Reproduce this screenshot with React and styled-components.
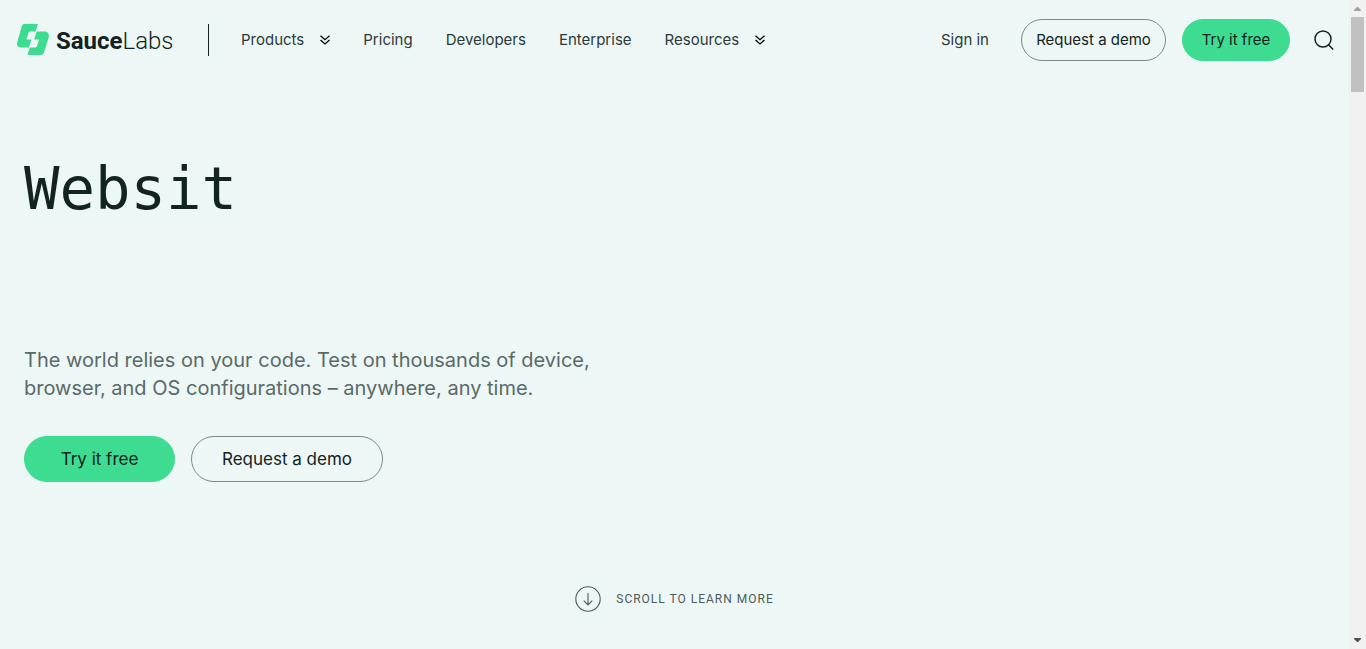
import React from "react";
import styled, { createGlobalStyle } from "styled-components";

const ink = "#132322";
const green = "#3ddc91";

const GlobalStyle = createGlobalStyle`
  *, *::before, *::after { box-sizing: border-box; }
  body {
    margin: 0;
    background: #edf7f6;
    color: ${ink};
    font-family: Inter, "Liberation Sans", sans-serif;
  }
`;

const Page = styled.div`
  display: flex;
  min-height: 100vh;
`;

const Content = styled.div`
  flex: 1;
  min-width: 0;
  display: flex;
  flex-direction: column;
`;

const Header = styled.header`
  display: flex;
  align-items: center;
  height: 80px;
  padding: 0 11px 0 16px;
`;

const Brand = styled.a`
  display: flex;
  align-items: center;
  gap: 6px;
  width: 192px;
  color: ${ink};
  text-decoration: none;
`;

const BrandName = styled.span`
  padding-top: 2px;
  font-family: Roboto, sans-serif;
  font-size: 24px;
  line-height: 32px;
  font-weight: 300;
  white-space: nowrap;

  b { font-weight: 700; }
`;

const Divider = styled.span`
  width: 1px;
  height: 32px;
  margin-right: 32px;
  background: ${ink};
`;

const Nav = styled.nav`
  display: flex;
  align-items: center;
  gap: 33px;
`;

const navText = `
  font-family: inherit;
  font-size: 15px;
  line-height: 20px;
  color: #2b3a39;
  white-space: nowrap;
`;

const NavLink = styled.a`
  ${navText}
  text-decoration: none;
`;

const NavMenu = styled.button`
  ${navText}
  display: flex;
  align-items: center;
  gap: 16px;
  padding: 0;
  border: 0;
  background: none;
`;

const Actions = styled.div`
  display: flex;
  align-items: center;
  gap: 16px;
  margin-left: auto;

  ${NavLink} { margin-right: 16px; }
`;

const Pill = styled.button`
  min-width: ${(p) => p.$minWidth}px;
  height: ${(p) => (p.$large ? 46 : 42)}px;
  padding: 0 ${(p) => (p.$large ? 30 : 14)}px;
  border: 1px solid ${(p) => (p.$filled ? green : "#7b8988")};
  border-radius: 23px;
  background: ${(p) => (p.$filled ? green : "transparent")};
  color: ${ink};
  font-family: inherit;
  font-size: ${(p) => (p.$large ? 17 : 15)}px;
  line-height: 20px;
  white-space: nowrap;
`;

const SearchButton = styled.button`
  display: flex;
  padding: 4px;
  margin-left: 4px;
  border: 0;
  background: none;
  color: ${ink};
`;

const Hero = styled.main`
  flex: 1;
  display: flex;
  flex-direction: column;
  padding: 73px 24px 37px;
`;

const Title = styled.h1`
  margin: 0;
  min-height: 193px;
  font-family: "DejaVu Sans Mono", monospace;
  font-size: 59px;
  line-height: 72px;
  font-weight: 400;
`;

const Lead = styled.p`
  max-width: 600px;
  margin: 0 0 34px;
  font-size: 20px;
  line-height: 28px;
  color: #5a6a68;
`;

const ButtonRow = styled.div`
  display: flex;
  gap: 16px;
`;

const ScrollHint = styled.a`
  display: flex;
  align-items: center;
  align-self: center;
  gap: 15px;
  margin-top: auto;
  color: #4b5c5a;
  font-family: Roboto, sans-serif;
  font-size: 12px;
  line-height: 20px;
  letter-spacing: 1px;
  text-transform: uppercase;
  text-decoration: none;
`;

const ScrollBar = styled.div`
  width: 17px;
  display: flex;
  flex-direction: column;
  align-items: center;
  background: #f1f1f1;
`;

const ScrollTrack = styled.div`
  flex: 1;
  width: 13px;
`;

const ScrollThumb = styled.div`
  height: 75px;
  background: #c1c1c1;
`;

const LogoMark = () => (
  <svg width="34" height="34" viewBox="0 0 34 34" fill={green} aria-hidden="true">
    <path d="M8.500 1H22l-2.400 7.500h-4.800c-1.300 0-2 .6-2.400 1.800l-2 6.200h5l-2.600 8.100H5.500C2 24.600.3 22 1.300 18.900L5.500 4C6 2 7 1 8.500 1z" />
    <path d="M20.700 8.500h7.800c3.400 0 5.100 2.600 4.200 5.700l-4.500 14.900c-.600 1.900-1.800 2.900-3.600 2.900H11.500l2.400-7.400h4.800c1.200 0 2-.6 2.400-1.800l2-6.300h-5z" />
  </svg>
);

const DoubleChevron = () => (
  <svg width="10" height="10" viewBox="0 0 10 10" fill="none" stroke="#000" strokeWidth="1.300" aria-hidden="true">
    <path d="M.5.7 5 4.700 9.500.7M.5 4.900 5 8.900l4.500-4" />
  </svg>
);

const SearchIcon = () => (
  <svg width="20" height="20" viewBox="0 0 20 20" fill="none" stroke="currentColor" strokeWidth="1.500" aria-hidden="true">
    <circle cx="9" cy="9" r="8" />
    <path d="m14.200 14.500 5 5" />
  </svg>
);

const DownCircle = () => (
  <svg width="26" height="26" viewBox="0 0 26 26" fill="none" stroke="currentColor" strokeWidth="1.100" aria-hidden="true">
    <circle cx="13" cy="13" r="12.200" />
    <path d="M13 7v12M8.700 14.700 13 19l4.300-4.300" />
  </svg>
);

const ScrollArrow = ({ down }) => (
  <svg width="17" height="17" viewBox="0 0 17 17" fill={down ? "#505050" : "#a3a3a3"} aria-hidden="true">
    <path d={down ? "M5 6h7v1l-3 3H8L5 7z" : "M5 11h7v-1L9 7H8l-3 3z"} />
  </svg>
);

export default function App() {
  return (
    <Page>
      <GlobalStyle />
      <Content>
        <Header>
          <Brand href="#" aria-label="SauceLabs">
            <LogoMark />
            <BrandName><b>Sauce</b>Labs</BrandName>
          </Brand>
          <Divider />
          <Nav>
            <NavMenu type="button">Products <DoubleChevron /></NavMenu>
            <NavLink href="#">Pricing</NavLink>
            <NavLink href="#">Developers</NavLink>
            <NavLink href="#">Enterprise</NavLink>
            <NavMenu type="button">Resources <DoubleChevron /></NavMenu>
          </Nav>
          <Actions>
            <NavLink href="#">Sign in</NavLink>
            <Pill type="button" $minWidth={145}>Request a demo</Pill>
            <Pill type="button" $minWidth={108} $filled>Try it free</Pill>
            <SearchButton type="button" aria-label="Search"><SearchIcon /></SearchButton>
          </Actions>
        </Header>
        <Hero>
          <Title>Websit</Title>
          <Lead>
            The world relies on your code. Test on thousands of device, browser, and OS
            configurations – anywhere, any time.
          </Lead>
          <ButtonRow>
            <Pill type="button" $large $filled $minWidth={151}>Try it free</Pill>
            <Pill type="button" $large $minWidth={192}>Request a demo</Pill>
          </ButtonRow>
          <ScrollHint href="#">
            <DownCircle />
            Scroll to learn more
          </ScrollHint>
        </Hero>
      </Content>
      <ScrollBar aria-hidden="true">
        <ScrollArrow />
        <ScrollTrack><ScrollThumb /></ScrollTrack>
        <ScrollArrow down />
      </ScrollBar>
    </Page>
  );
}
